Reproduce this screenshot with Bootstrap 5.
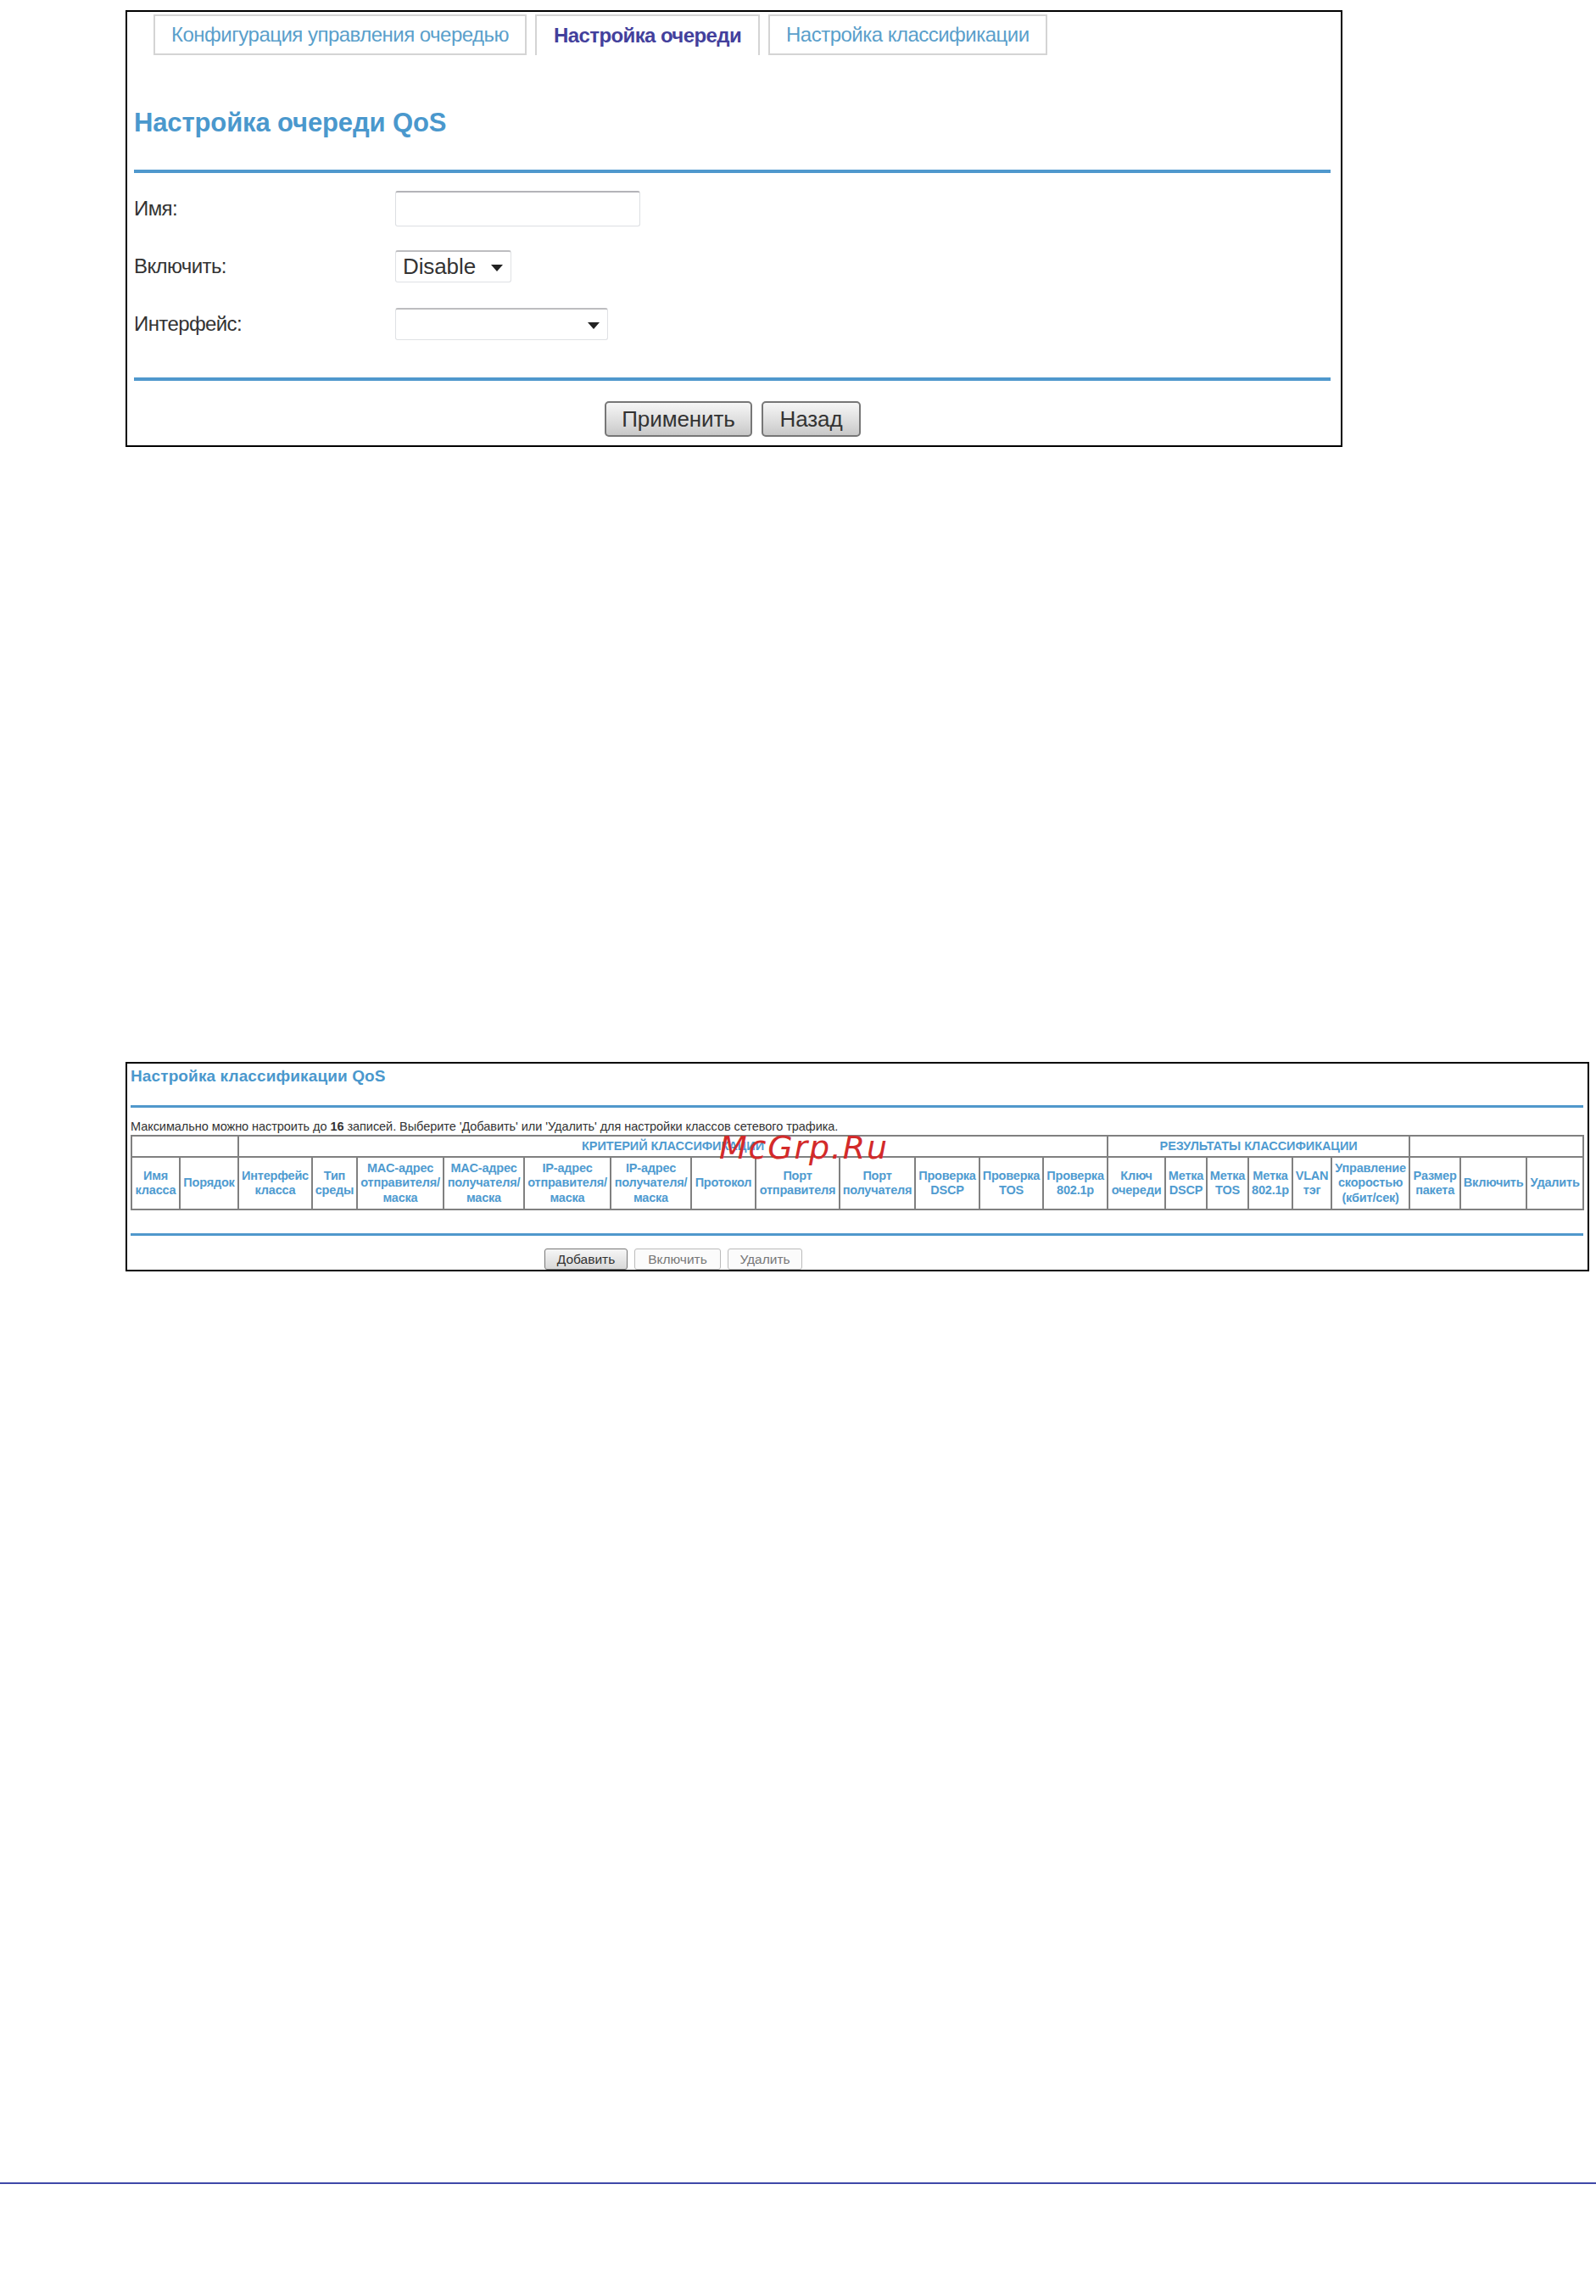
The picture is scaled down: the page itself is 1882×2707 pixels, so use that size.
<!DOCTYPE html>
<html lang="ru"><head><meta charset="utf-8"><title>QoS</title>
<link rel="stylesheet" href="https://cdn.jsdelivr.net/npm/bootstrap@5.3.0/dist/css/bootstrap.min.css">
<style>
html,body{background:#fff;font-family:"Liberation Sans",Arial,sans-serif;color:#2c2c2c}
body{height:2707px;overflow:hidden;position:relative}
.frame-a{margin:12px 0 0 148px;width:1435px;height:515px;border:2px solid #000;padding:3px 0 0 8px}
.tabstrip{margin-left:23px;gap:10px;height:48px}
.tabitem{height:48px;padding:0 19px;border:2px solid #d4d4d4;font-size:24px;letter-spacing:-.52px;color:#5a9fcb;display:flex;align-items:center}
.tabitem.is-on{color:#43409c;font-weight:700;border-bottom:0;letter-spacing:-.6px;padding:0 20px}
.head-a{font-size:31px;font-weight:700;color:#4a98cd;margin:0;line-height:36px;padding-top:62px;letter-spacing:-.13px}
.rule-a{height:4px;background:#4f98cd;width:1411px}
.rule-a.r1{margin-top:37px}
.fieldrow{display:flex;align-items:center;font-size:24px;letter-spacing:-.6px;color:#333}
.fieldlabel{width:308px}
.txtbox{width:289px;height:42px;border:1px solid #dcdfe2;border-top:2px solid #b4b4b8;border-radius:3px}
.drop{position:relative;height:38px;border:1px solid #dfe1e4;border-top:2px solid #bdbdc0;border-radius:3px;font-size:26px;padding-left:8px;display:flex;align-items:center;letter-spacing:-.1px}
.drop::after{content:"";position:absolute;top:15px;right:9px;border:7px solid transparent;border-top:8px solid #222;border-bottom:0}
.drop-s{width:137px}.drop-l{width:251px}
.r-1{margin-top:21px}.r-2{margin-top:28px}.r-3{margin-top:30px}
.rule-a.r2{margin-top:44px}
.actions-a{gap:11px;margin-top:24px;padding-left:555px}
.pushbtn{height:42px;border:2px solid #777;border-radius:5px;background:linear-gradient(#f6f6f6,#dcdcdc 60%,#c8c8c8);font-size:26px;color:#333;padding:0;display:flex;align-items:center;justify-content:center;letter-spacing:-.1px}
.pb-apply{width:174px}.pb-back{width:117px}
.frame-b{position:relative;margin:725px 0 0 148px;width:1726px;height:247px;border:2px solid #000;padding:1px 0 0 4px}
.head-b{font-size:19px;font-weight:700;color:#4a98cd;margin:0;line-height:22px;padding-top:3px;letter-spacing:.12px}
.rule-b{height:3px;background:#5098cc;width:1713px}
.rule-b.t{margin-top:23px}
.notice{font-size:14.5px;line-height:18px;margin:13px 0 0 0;color:#333;letter-spacing:-.05px}
.qos{table-layout:fixed;border-collapse:collapse;margin:1px 0 0 0;width:1712px;color:#4f9bd0;font-size:14.5px;font-weight:700;line-height:17.5px;text-align:center}
.qos td{border:2px solid #808080;padding:0;vertical-align:middle;letter-spacing:-.2px;overflow:hidden;white-space:nowrap}
.qos tr.t1 td{height:25px;letter-spacing:-.05px}.qos tr.t2 td{height:62px}
.rule-b.u{margin-top:27px}
.actions-b{position:absolute;left:492px;top:218px;gap:8px}
.smallbtn{height:25px;border:1px solid #777;border-radius:3px;background:linear-gradient(#f6f6f6,#d8d8d8);font-size:15.5px;color:#333;display:flex;align-items:center;justify-content:center;padding:0}
.smallbtn.off{border-color:#bbb;background:#fbfbfb;color:#777}
.sb-1{width:98px}.sb-2{width:102px}.sb-3{width:88px}
.stamp{position:absolute;left:698px;top:77px;color:#d32a2a;font-family:"DejaVu Sans",sans-serif;font-style:italic;font-size:38px;line-height:44px;letter-spacing:1.8px;white-space:nowrap}
.page-foot{position:absolute;left:0;right:0;top:2573px;height:2px;background:#3f48a8}
</style></head><body>
<section class="frame-a">
  <div class="d-flex tabstrip">
    <div class="tabitem">Конфигурация управления очередью</div>
    <div class="tabitem is-on">Настройка очереди</div>
    <div class="tabitem">Настройка классификации</div>
  </div>
  <h2 class="head-a">Настройка очереди QoS</h2>
  <div class="rule-a r1"></div>
  <div class="fieldrow r-1"><span class="fieldlabel">Имя:</span><div class="txtbox"></div></div>
  <div class="fieldrow r-2"><span class="fieldlabel">Включить:</span><div class="drop drop-s">Disable</div></div>
  <div class="fieldrow r-3"><span class="fieldlabel">Интерфейс:</span><div class="drop drop-l"></div></div>
  <div class="rule-a r2"></div>
  <div class="d-flex actions-a"><button class="pushbtn pb-apply">Применить</button><button class="pushbtn pb-back">Назад</button></div>
</section>
<section class="frame-b">
  <h2 class="head-b">Настройка классификации QoS</h2>
  <div class="rule-b t"></div>
  <p class="notice">Максимально можно настроить до <b>16</b> записей. Выберите 'Добавить' или 'Удалить' для настройки классов сетевого трафика.</p>
  <table class="qos">
    <colgroup><col style="width:57px"><col style="width:69px"><col style="width:87px"><col style="width:53px"><col style="width:102px"><col style="width:95px"><col style="width:102px"><col style="width:95px"><col style="width:76px"><col style="width:99px"><col style="width:89px"><col style="width:76px"><col style="width:75px"><col style="width:76px"><col style="width:68px"><col style="width:49px"><col style="width:49px"><col style="width:52px"><col style="width:46px"><col style="width:92px"><col style="width:60px"><col style="width:78px"><col style="width:67px"></colgroup>
    <tr class="t1"><td colspan="2"></td><td colspan="12">КРИТЕРИЙ КЛАССИФИКАЦИИ</td><td colspan="6">РЕЗУЛЬТАТЫ КЛАССИФИКАЦИИ</td><td colspan="3"></td></tr>
    <tr class="t2">
      <td>Имя<br>класса</td><td>Порядок</td><td>Интерфейс<br>класса</td><td>Тип<br>среды</td><td>MAC-адрес<br>отправителя/<br>маска</td><td>MAC-адрес<br>получателя/<br>маска</td><td>IP-адрес<br>отправителя/<br>маска</td><td>IP-адрес<br>получателя/<br>маска</td><td>Протокол</td><td>Порт<br>отправителя</td><td>Порт<br>получателя</td><td>Проверка<br>DSCP</td><td>Проверка<br>TOS</td><td>Проверка<br>802.1p</td><td>Ключ<br>очереди</td><td>Метка<br>DSCP</td><td>Метка<br>TOS</td><td>Метка<br>802.1p</td><td>VLAN<br>тэг</td><td>Управление<br>скоростью<br>(кбит/сек)</td><td>Размер<br>пакета</td><td>Включить</td><td>Удалить</td>
    </tr>
  </table>
  <div class="rule-b u"></div>
  <div class="d-flex actions-b"><button class="smallbtn sb-1">Добавить</button><button class="smallbtn off sb-2">Включить</button><button class="smallbtn off sb-3">Удалить</button></div>
  <div class="stamp">McGrp.Ru</div>
</section>
<div class="page-foot"></div>
<script src="https://cdn.jsdelivr.net/npm/bootstrap@5.3.0/dist/js/bootstrap.bundle.min.js"></script>
</body></html>
